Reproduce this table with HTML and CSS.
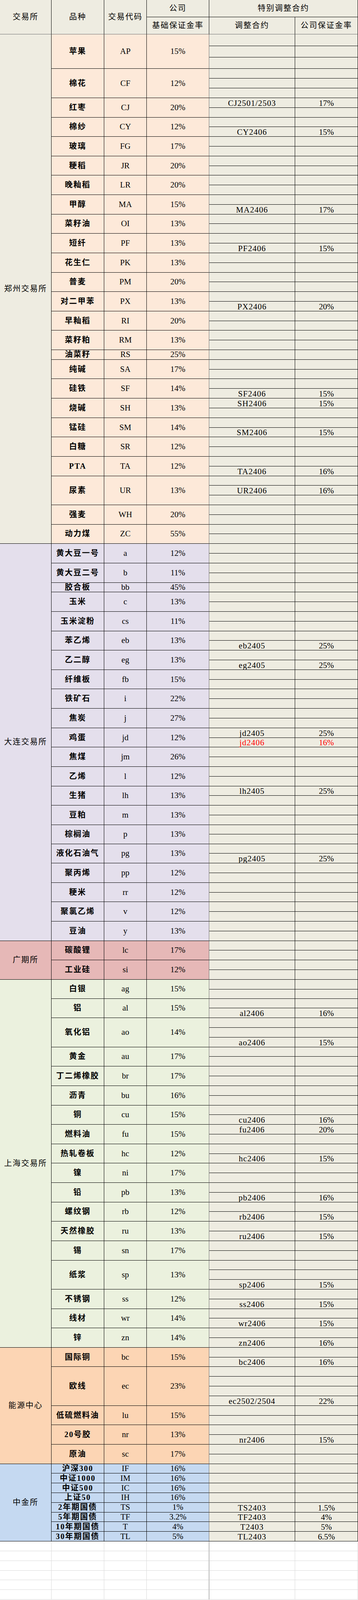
FILE: index.html
```html
<!DOCTYPE html>
<html lang="zh-CN">
<head>
<meta charset="utf-8">
<title>期货保证金率</title>
<link rel="stylesheet" href="styles.css">
</head>
<body>
<div class="sheet">
<div class="hd h-x">交易所</div><div class="hd h-n">品种</div><div class="hd h-c">交易代码</div><div class="hd h-r1">公司</div><div class="hd h-sp">特别调整合约</div>
<div class="hd h-r2">基础保证金率</div><div class="hd h-a">调整合约</div><div class="hd h-m">公司保证金率</div>

<div class="grp zz">
<div class="x s52">郑州交易所</div><div class="n s3">苹果</div><div class="c s3">AP</div><div class="r s3">15%</div><div class="a"></div><div class="m"></div>
<div class="a"></div><div class="m"></div>
<div class="a"></div><div class="m"></div>
<div class="n s3">棉花</div><div class="c s3">CF</div><div class="r s3">12%</div><div class="a"></div><div class="m"></div>
<div class="a"></div><div class="m"></div>
<div class="a"></div><div class="m"></div>
<div class="n s2">红枣</div><div class="c s2">CJ</div><div class="r s2">20%</div><div class="a">CJ2501/2503</div><div class="m">17%</div>
<div class="a"></div><div class="m"></div>
<div class="n s2">棉纱</div><div class="c s2">CY</div><div class="r s2">12%</div><div class="a"></div><div class="m"></div>
<div class="a">CY2406</div><div class="m">15%</div>
<div class="n s2">玻璃</div><div class="c s2">FG</div><div class="r s2">17%</div><div class="a"></div><div class="m"></div>
<div class="a"></div><div class="m"></div>
<div class="n s2">粳稻</div><div class="c s2">JR</div><div class="r s2">20%</div><div class="a"></div><div class="m"></div>
<div class="a"></div><div class="m"></div>
<div class="n s2">晚籼稻</div><div class="c s2">LR</div><div class="r s2">20%</div><div class="a"></div><div class="m"></div>
<div class="a"></div><div class="m"></div>
<div class="n s2">甲醇</div><div class="c s2">MA</div><div class="r s2">15%</div><div class="a"></div><div class="m"></div>
<div class="a">MA2406</div><div class="m">17%</div>
<div class="n s2">菜籽油</div><div class="c s2">OI</div><div class="r s2">13%</div><div class="a"></div><div class="m"></div>
<div class="a"></div><div class="m"></div>
<div class="n s2">短纤</div><div class="c s2">PF</div><div class="r s2">13%</div><div class="a"></div><div class="m"></div>
<div class="a">PF2406</div><div class="m">15%</div>
<div class="n s2">花生仁</div><div class="c s2">PK</div><div class="r s2">13%</div><div class="a"></div><div class="m"></div>
<div class="a"></div><div class="m"></div>
<div class="n s2">普麦</div><div class="c s2">PM</div><div class="r s2">20%</div><div class="a"></div><div class="m"></div>
<div class="a"></div><div class="m"></div>
<div class="n s2">对二甲苯</div><div class="c s2">PX</div><div class="r s2">13%</div><div class="a"></div><div class="m"></div>
<div class="a">PX2406</div><div class="m">20%</div>
<div class="n s2">早籼稻</div><div class="c s2">RI</div><div class="r s2">20%</div><div class="a"></div><div class="m"></div>
<div class="a"></div><div class="m"></div>
<div class="n s2">菜籽粕</div><div class="c s2">RM</div><div class="r s2">13%</div><div class="a"></div><div class="m"></div>
<div class="a"></div><div class="m"></div>
<div class="n">油菜籽</div><div class="c">RS</div><div class="r">25%</div><div class="a"></div><div class="m"></div>
<div class="n s2">纯碱</div><div class="c s2">SA</div><div class="r s2">17%</div><div class="a"></div><div class="m"></div>
<div class="a"></div><div class="m"></div>
<div class="n s2">硅铁</div><div class="c s2">SF</div><div class="r s2">14%</div><div class="a"></div><div class="m"></div>
<div class="a">SF2406</div><div class="m">15%</div>
<div class="n s2">烧碱</div><div class="c s2">SH</div><div class="r s2">13%</div><div class="a">SH2406</div><div class="m">15%</div>
<div class="a"></div><div class="m"></div>
<div class="n s2">锰硅</div><div class="c s2">SM</div><div class="r s2">14%</div><div class="a"></div><div class="m"></div>
<div class="a">SM2406</div><div class="m">15%</div>
<div class="n s2">白糖</div><div class="c s2">SR</div><div class="r s2">12%</div><div class="a"></div><div class="m"></div>
<div class="a"></div><div class="m"></div>
<div class="n s2">PTA</div><div class="c s2">TA</div><div class="r s2">12%</div><div class="a"></div><div class="m"></div>
<div class="a">TA2406</div><div class="m">16%</div>
<div class="n s3">尿素</div><div class="c s3">UR</div><div class="r s3">13%</div><div class="a"></div><div class="m"></div>
<div class="a">UR2406</div><div class="m">16%</div>
<div class="a"></div><div class="m"></div>
<div class="n s2">强麦</div><div class="c s2">WH</div><div class="r s2">20%</div><div class="a"></div><div class="m"></div>
<div class="a"></div><div class="m"></div>
<div class="n s2">动力煤</div><div class="c s2">ZC</div><div class="r s2">55%</div><div class="a"></div><div class="m"></div>
<div class="a"></div><div class="m"></div>
</div>

<div class="grp dl">
<div class="x s41">大连交易所</div><div class="n s2">黄大豆一号</div><div class="c s2">a</div><div class="r s2">12%</div><div class="a"></div><div class="m"></div>
<div class="a"></div><div class="m"></div>
<div class="n s2">黄大豆二号</div><div class="c s2">b</div><div class="r s2">11%</div><div class="a"></div><div class="m"></div>
<div class="a"></div><div class="m"></div>
<div class="n">胶合板</div><div class="c">bb</div><div class="r">45%</div><div class="a"></div><div class="m"></div>
<div class="n s2">玉米</div><div class="c s2">c</div><div class="r s2">13%</div><div class="a"></div><div class="m"></div>
<div class="a"></div><div class="m"></div>
<div class="n s2">玉米淀粉</div><div class="c s2">cs</div><div class="r s2">11%</div><div class="a"></div><div class="m"></div>
<div class="a"></div><div class="m"></div>
<div class="n s2">苯乙烯</div><div class="c s2">eb</div><div class="r s2">13%</div><div class="a"></div><div class="m"></div>
<div class="a">eb2405</div><div class="m">25%</div>
<div class="n s2">乙二醇</div><div class="c s2">eg</div><div class="r s2">13%</div><div class="a"></div><div class="m"></div>
<div class="a">eg2405</div><div class="m">25%</div>
<div class="n s2">纤维板</div><div class="c s2">fb</div><div class="r s2">15%</div><div class="a"></div><div class="m"></div>
<div class="a"></div><div class="m"></div>
<div class="n s2">铁矿石</div><div class="c s2">i</div><div class="r s2">22%</div><div class="a"></div><div class="m"></div>
<div class="a"></div><div class="m"></div>
<div class="n s2">焦炭</div><div class="c s2">j</div><div class="r s2">27%</div><div class="a"></div><div class="m"></div>
<div class="a"></div><div class="m"></div>
<div class="n s2">鸡蛋</div><div class="c s2">jd</div><div class="r s2">12%</div><div class="a">jd2405</div><div class="m">25%</div>
<div class="a red">jd2406</div><div class="m red">16%</div>
<div class="n s2">焦煤</div><div class="c s2">jm</div><div class="r s2">26%</div><div class="a"></div><div class="m"></div>
<div class="a"></div><div class="m"></div>
<div class="n s2">乙烯</div><div class="c s2">l</div><div class="r s2">12%</div><div class="a"></div><div class="m"></div>
<div class="a"></div><div class="m"></div>
<div class="n s2">生猪</div><div class="c s2">lh</div><div class="r s2">13%</div><div class="a">lh2405</div><div class="m">25%</div>
<div class="a"></div><div class="m"></div>
<div class="n s2">豆粕</div><div class="c s2">m</div><div class="r s2">13%</div><div class="a"></div><div class="m"></div>
<div class="a"></div><div class="m"></div>
<div class="n s2">棕榈油</div><div class="c s2">p</div><div class="r s2">13%</div><div class="a"></div><div class="m"></div>
<div class="a"></div><div class="m"></div>
<div class="n s2">液化石油气</div><div class="c s2">pg</div><div class="r s2">13%</div><div class="a"></div><div class="m"></div>
<div class="a">pg2405</div><div class="m">25%</div>
<div class="n s2">聚丙烯</div><div class="c s2">pp</div><div class="r s2">12%</div><div class="a"></div><div class="m"></div>
<div class="a"></div><div class="m"></div>
<div class="n s2">粳米</div><div class="c s2">rr</div><div class="r s2">12%</div><div class="a"></div><div class="m"></div>
<div class="a"></div><div class="m"></div>
<div class="n s2">聚氯乙烯</div><div class="c s2">v</div><div class="r s2">12%</div><div class="a"></div><div class="m"></div>
<div class="a"></div><div class="m"></div>
<div class="n s2">豆油</div><div class="c s2">y</div><div class="r s2">13%</div><div class="a"></div><div class="m"></div>
<div class="a"></div><div class="m"></div>
</div>

<div class="grp gq">
<div class="x s4">广期所</div><div class="n s2">碳酸锂</div><div class="c s2">lc</div><div class="r s2">17%</div><div class="a"></div><div class="m"></div>
<div class="a"></div><div class="m"></div>
<div class="n s2">工业硅</div><div class="c s2">si</div><div class="r s2">12%</div><div class="a"></div><div class="m"></div>
<div class="a"></div><div class="m"></div>
</div>

<div class="grp sh">
<div class="x s38">上海交易所</div><div class="n s2">白银</div><div class="c s2">ag</div><div class="r s2">15%</div><div class="a"></div><div class="m"></div>
<div class="a"></div><div class="m"></div>
<div class="n s2">铝</div><div class="c s2">al</div><div class="r s2">15%</div><div class="a"></div><div class="m"></div>
<div class="a">al2406</div><div class="m">16%</div>
<div class="n s3">氧化铝</div><div class="c s3">ao</div><div class="r s3">14%</div><div class="a"></div><div class="m"></div>
<div class="a"></div><div class="m"></div>
<div class="a">ao2406</div><div class="m">15%</div>
<div class="n s2">黄金</div><div class="c s2">au</div><div class="r s2">17%</div><div class="a"></div><div class="m"></div>
<div class="a"></div><div class="m"></div>
<div class="n s2">丁二烯橡胶</div><div class="c s2">br</div><div class="r s2">17%</div><div class="a"></div><div class="m"></div>
<div class="a"></div><div class="m"></div>
<div class="n s2">沥青</div><div class="c s2">bu</div><div class="r s2">16%</div><div class="a"></div><div class="m"></div>
<div class="a"></div><div class="m"></div>
<div class="n s2">铜</div><div class="c s2">cu</div><div class="r s2">15%</div><div class="a"></div><div class="m"></div>
<div class="a">cu2406</div><div class="m">16%</div>
<div class="n s2">燃料油</div><div class="c s2">fu</div><div class="r s2">15%</div><div class="a">fu2406</div><div class="m">20%</div>
<div class="a"></div><div class="m"></div>
<div class="n s2">热轧卷板</div><div class="c s2">hc</div><div class="r s2">12%</div><div class="a"></div><div class="m"></div>
<div class="a">hc2406</div><div class="m">15%</div>
<div class="n s2">镍</div><div class="c s2">ni</div><div class="r s2">17%</div><div class="a"></div><div class="m"></div>
<div class="a"></div><div class="m"></div>
<div class="n s2">铅</div><div class="c s2">pb</div><div class="r s2">13%</div><div class="a"></div><div class="m"></div>
<div class="a">pb2406</div><div class="m">16%</div>
<div class="n s2">螺纹钢</div><div class="c s2">rb</div><div class="r s2">12%</div><div class="a"></div><div class="m"></div>
<div class="a">rb2406</div><div class="m">15%</div>
<div class="n s2">天然橡胶</div><div class="c s2">ru</div><div class="r s2">13%</div><div class="a"></div><div class="m"></div>
<div class="a">ru2406</div><div class="m">15%</div>
<div class="n s2">锡</div><div class="c s2">sn</div><div class="r s2">17%</div><div class="a"></div><div class="m"></div>
<div class="a"></div><div class="m"></div>
<div class="n s3">纸浆</div><div class="c s3">sp</div><div class="r s3">13%</div><div class="a"></div><div class="m"></div>
<div class="a"></div><div class="m"></div>
<div class="a">sp2406</div><div class="m">15%</div>
<div class="n s2">不锈钢</div><div class="c s2">ss</div><div class="r s2">12%</div><div class="a"></div><div class="m"></div>
<div class="a">ss2406</div><div class="m">15%</div>
<div class="n s2">线材</div><div class="c s2">wr</div><div class="r s2">14%</div><div class="a"></div><div class="m"></div>
<div class="a">wr2406</div><div class="m">15%</div>
<div class="n s2">锌</div><div class="c s2">zn</div><div class="r s2">14%</div><div class="a"></div><div class="m"></div>
<div class="a">zn2406</div><div class="m">16%</div>
</div>

<div class="grp ny">
<div class="x s12">能源中心</div><div class="n s2">国际铜</div><div class="c s2">bc</div><div class="r s2">15%</div><div class="a"></div><div class="m"></div>
<div class="a">bc2406</div><div class="m">16%</div>
<div class="n s4">欧线</div><div class="c s4">ec</div><div class="r s4">23%</div><div class="a"></div><div class="m"></div>
<div class="a"></div><div class="m"></div>
<div class="a"></div><div class="m"></div>
<div class="a">ec2502/2504</div><div class="m">22%</div>
<div class="n s2">低硫燃料油</div><div class="c s2">lu</div><div class="r s2">15%</div><div class="a"></div><div class="m"></div>
<div class="a"></div><div class="m"></div>
<div class="n s2">20号胶</div><div class="c s2">nr</div><div class="r s2">13%</div><div class="a"></div><div class="m"></div>
<div class="a">nr2406</div><div class="m">15%</div>
<div class="n s2">原油</div><div class="c s2">sc</div><div class="r s2">17%</div><div class="a"></div><div class="m"></div>
<div class="a"></div><div class="m"></div>
</div>

<div class="grp zj">
<div class="x s8">中金所</div><div class="n">沪深300</div><div class="c">IF</div><div class="r">16%</div><div class="a"></div><div class="m"></div>
<div class="n">中证1000</div><div class="c">IM</div><div class="r">16%</div><div class="a"></div><div class="m"></div>
<div class="n">中证500</div><div class="c">IC</div><div class="r">16%</div><div class="a"></div><div class="m"></div>
<div class="n">上证50</div><div class="c">IH</div><div class="r">16%</div><div class="a"></div><div class="m"></div>
<div class="n">2年期国债</div><div class="c">TS</div><div class="r">1%</div><div class="a">TS2403</div><div class="m">1.5%</div>
<div class="n">5年期国债</div><div class="c">TF</div><div class="r">3.2%</div><div class="a">TF2403</div><div class="m">4%</div>
<div class="n">10年期国债</div><div class="c">T</div><div class="r">4%</div><div class="a">T2403</div><div class="m">5%</div>
<div class="n">30年期国债</div><div class="c">TL</div><div class="r">5%</div><div class="a">TL2403</div><div class="m">6.5%</div>
</div>

<div class="grp blank">
<div class="x"></div><div class="n"></div><div class="c"></div><div class="r"></div><div class="a"></div><div class="m"></div>
<div class="x"></div><div class="n"></div><div class="c"></div><div class="r"></div><div class="a"></div><div class="m"></div>
<div class="x"></div><div class="n"></div><div class="c"></div><div class="r"></div><div class="a"></div><div class="m"></div>
<div class="x"></div><div class="n"></div><div class="c"></div><div class="r"></div><div class="a"></div><div class="m"></div>
<div class="x"></div><div class="n"></div><div class="c"></div><div class="r"></div><div class="a"></div><div class="m"></div>
<div class="x"></div><div class="n"></div><div class="c"></div><div class="r"></div><div class="a"></div><div class="m"></div>
</div>
</div>
</body>
</html>
```

FILE: styles.css
```css
html, body {
  margin: 0;
  padding: 0;
  background: #ffffff;
}

/* one spreadsheet row unit: the sheet is laid out for a 4457px tall frame
   and follows the real viewport height so every row stays in view */
.sheet {
  --u: calc(100vh / 4457);
  display: grid;
  width: 917px;
  grid-template-columns: 132px 135px 109px 160px 220px 161px;
  grid-template-rows:
    calc(var(--u) * 48) calc(var(--u) * 48)
    repeat(3, calc(var(--u) * 32))
    repeat(78, calc(var(--u) * 27)) calc(var(--u) * 26)
    repeat(16, calc(var(--u) * 27)) calc(var(--u) * 26)
    repeat(62, calc(var(--u) * 27));
  font-family: "Liberation Serif", "Noto Sans CJK SC", serif;
  font-size: 20px;
  color: #000;
}

.grp { display: contents; }

.hd,
.grp > div {
  box-sizing: border-box;
  border-right: 1px solid #000;
  border-bottom: 1px solid #000;
  display: flex;
  align-items: center;
  justify-content: center;
  white-space: nowrap;
  line-height: 21px;
  min-width: 0;
  min-height: 0;
}

/* header */
.hd {
  background: #eeece1;
  letter-spacing: 2px;
}
.h-x  { grid-column: 1; grid-row: 1 / span 2; }
.h-n  { grid-column: 2; grid-row: 1 / span 2; }
.h-c  { grid-column: 3; grid-row: 1 / span 2; }
.h-r1 { grid-column: 4; grid-row: 1; }
.h-sp { grid-column: 5 / span 2; grid-row: 1; }
.h-r2 { grid-column: 4; grid-row: 2; }
.h-a  { grid-column: 5; grid-row: 2; }
.h-m  { grid-column: 6; grid-row: 2; }
.h-x, .h-n, .h-c, .h-r2, .h-a, .h-m { border-bottom-color: #707070; }

/* body columns */
.x { grid-column: 1; letter-spacing: 2px; }
.n { grid-column: 2; font-weight: 700; letter-spacing: 2px; }
.c { grid-column: 3; font-size: 21px; }
.r { grid-column: 4; font-size: 21px; }
.a { grid-column: 5; font-size: 21px; letter-spacing: 1px; }
.m { grid-column: 6; font-size: 21px; }

.grp > .r { border-right-color: #707070; }

.s2  { grid-row-end: span 2; }
.s3  { grid-row-end: span 3; }
.s4  { grid-row-end: span 4; }
.s8  { grid-row-end: span 8; }
.s12 { grid-row-end: span 12; }
.s38 { grid-row-end: span 38; }
.s41 { grid-row-end: span 41; }
.s52 { grid-row-end: span 52; }

.grp > .a,
.grp > .m {
  background: #eeece1;
  align-items: flex-end;
}

.grp > .red { color: #ff0000; }

/* 郑州 */
.zz > .x { background: #eeece1; }
.zz > .n, .zz > .c, .zz > .r { background: #fde9d9; }

/* 大连 */
.dl > .x, .dl > .n, .dl > .c, .dl > .r { background: #e4dfec; }

/* 广期所 */
.gq > .x, .gq > .n, .gq > .c, .gq > .r { background: #e6b8b7; }

/* 上海 */
.sh > .x, .sh > .n, .sh > .c, .sh > .r { background: #ebf1de; }

/* 能源中心 */
.ny > .x, .ny > .n, .ny > .c, .ny > .r { background: #fcd5b4; }

/* 中金所 */
.zj > .x, .zj > .n, .zj > .c, .zj > .r { background: #c5d9f1; }

/* empty grid below the data */
.grp.blank > div {
  background: #ffffff;
  border-bottom-color: #d9d9d9;
  border-right-color: #d9d9d9;
}
.grp.blank > .r { border-right-color: #707070; }
```
